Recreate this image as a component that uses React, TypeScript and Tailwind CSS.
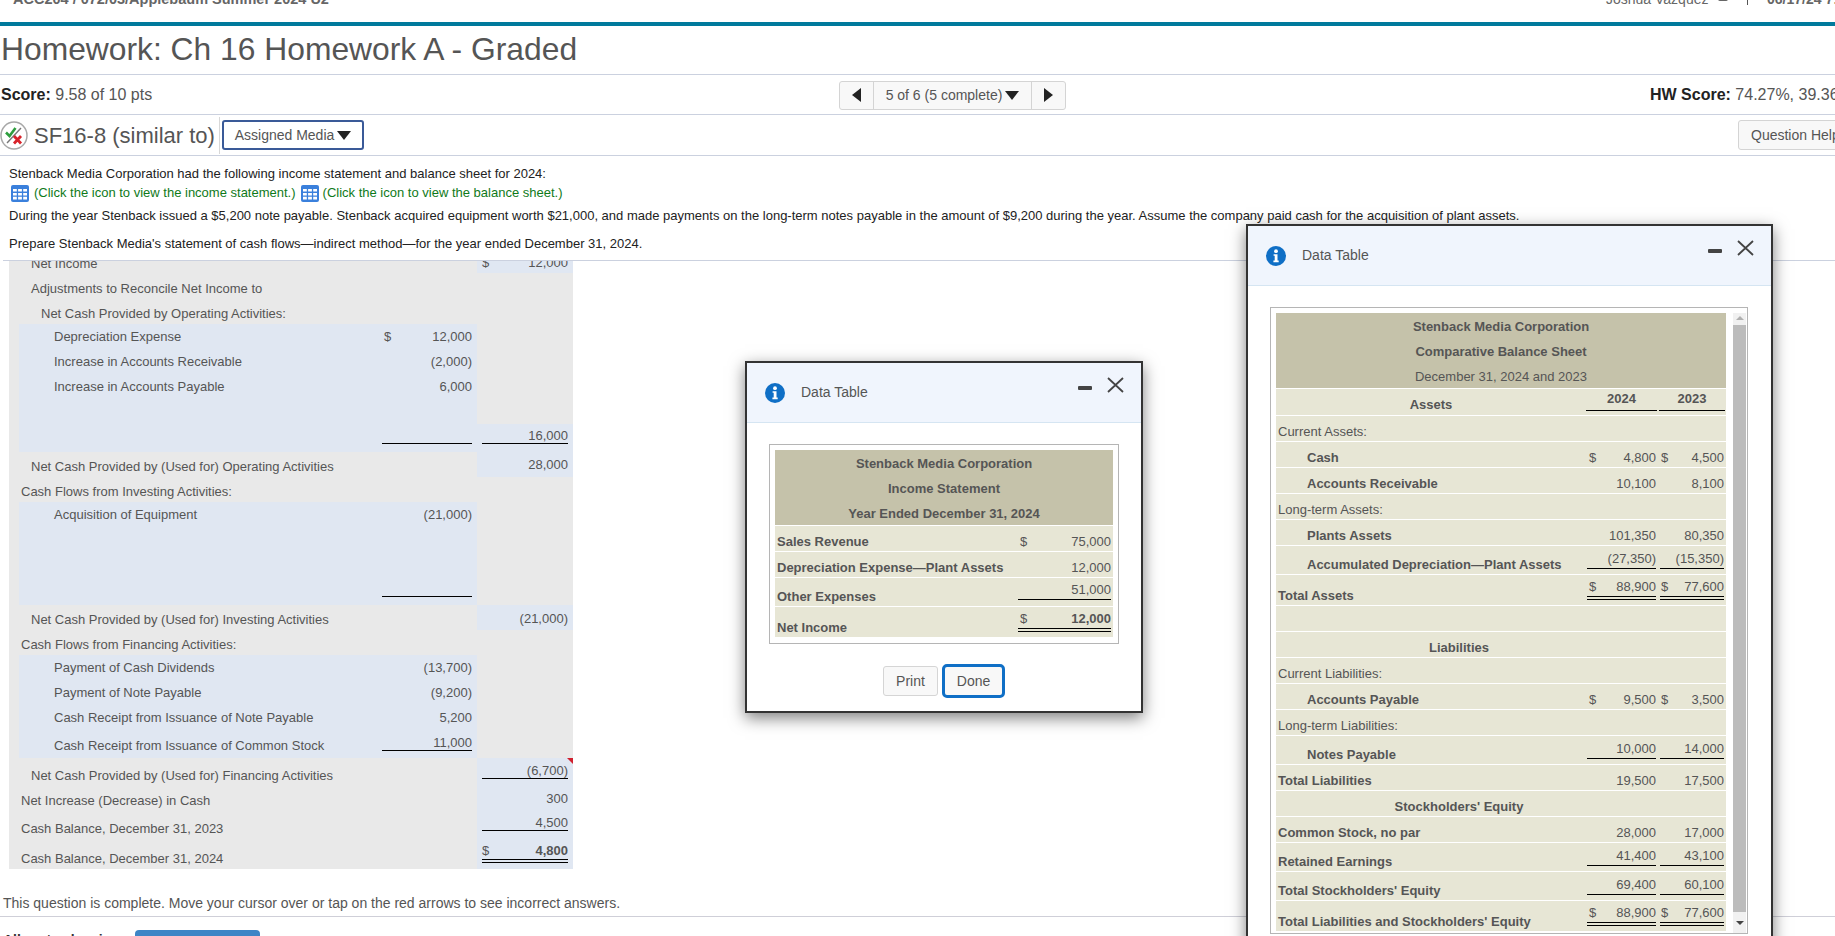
import type { ReactNode } from 'react';

const BLUE = 'bg-[#e0e7f2]';

type FlowRowProps = {
  h: string;
  label?: string;
  pl?: string;
  lt?: string;
  blue?: boolean;
  amount?: string;
  dollar?: boolean;
  at?: string;
  aLine?: boolean;
  total?: string;
  tDollar?: boolean;
  tt?: string;
  tLine?: 'single' | 'double';
  tBlue?: boolean;
  bold?: boolean;
  flag?: boolean;
};

function FlowRow({ h, label, pl, lt, blue, amount, dollar, at, aLine, total, tDollar, tt, tLine, tBlue, bold, flag }: FlowRowProps) {
  const showAmount = amount !== undefined || aLine;
  const lineClass = tLine === 'single' ? 'border-b border-black' : tLine === 'double' ? 'border-b-4 border-double border-black' : '';
  return (
    <div className={`flex pl-[10px] ${h}`}>
      <div className={`flex flex-1 ${blue ? BLUE : ''}`}>
        <div className={`flex-1 leading-[18px] ${pl} ${lt}`}>{label}</div>
        <div className={`w-[90px] mr-[5px] ${at}`}>
          {showAmount && (
            <div className={`flex justify-between h-[17px] leading-[18px] ${aLine ? 'border-b border-black' : ''}`}>
              <span className="pl-[2px]">{dollar ? '$' : ''}</span>
              <span>{amount}</span>
            </div>
          )}
        </div>
      </div>
      <div className={`relative w-[96px] px-[5px] ${tBlue ? BLUE : ''} ${tt}`}>
        {total !== undefined && (
          <div className={`flex justify-between leading-[18px] ${lineClass} ${tLine === 'single' ? 'h-[17px]' : ''} ${tLine === 'double' ? 'h-[21px]' : ''} ${bold ? 'font-bold' : ''}`}>
            <span className="font-normal">{tDollar ? '$' : ''}</span>
            <span>{total}</span>
          </div>
        )}
        {flag && <div className="absolute top-0 right-0 w-0 h-0 border-t-[6px] border-l-[6px] border-t-[#d0202e] border-l-transparent" />}
      </div>
    </div>
  );
}

function InfoIcon() {
  return (
    <svg width="20" height="20" viewBox="0 0 20 20" className="shrink-0">
      <circle cx="10" cy="10" r="10" fill="#0f6fc6" />
      <circle cx="10" cy="5.2" r="1.9" fill="#fff" />
      <path d="M7.6 8.2h3.9v6.4h1.2v1.6H7.4v-1.6h1.3V9.8H7.6z" fill="#fff" />
    </svg>
  );
}

function CloseIcon() {
  return (
    <svg width="17" height="16" viewBox="0 0 17 16">
      <path d="M1 1l15 14M16 1L1 15" stroke="#444" strokeWidth="1.8" fill="none" />
    </svg>
  );
}

function GridIcon() {
  return (
    <svg width="18" height="17" viewBox="0 0 18 17" className="shrink-0">
      <rect width="18" height="17" rx="2" fill="#3a80dc" />
      <path d="M2 4h3.8v2.6H2zM7.1 4h3.8v2.6H7.1zM12.2 4H16v2.6h-3.8zM2 7.9h3.8v2.6H2zM7.1 7.9h3.8v2.6H7.1zM12.2 7.9H16v2.6h-3.8zM2 11.8h3.8v2.6H2zM7.1 11.8h3.8v2.6H7.1zM12.2 11.8H16v2.6h-3.8z" fill="#fff" />
    </svg>
  );
}

function StatusIcon() {
  return (
    <svg width="28" height="29" viewBox="0 0 28 29" className="shrink-0">
      <ellipse cx="14" cy="14.5" rx="13" ry="13.5" fill="#fff" stroke="#a8a8a8" strokeWidth="1.5" />
      <path d="M21 7L7 22" stroke="#777" strokeWidth="1.4" />
      <path d="M6 11.5l3.5 3.5L15.5 7" stroke="#2e9e3e" strokeWidth="2.6" fill="none" />
      <path d="M14 15l7 7.5M21 15l-7 7.5" stroke="#d8232a" strokeWidth="2.8" fill="none" />
    </svg>
  );
}

function ModalHeader() {
  return (
    <div className="flex items-center h-[60px] pl-[18px] pr-[17px] bg-[#f0f5fd] border-b border-[#d5e5f2]">
      <InfoIcon />
      <span className="ml-[16px] text-[14px] text-[#555]">Data Table</span>
      <div className="ml-auto flex items-center gap-[15px] -mt-[16px]">
        <div className="w-[14px] h-[4px] rounded-[1px] bg-[#444] mt-[7px]" />
        <CloseIcon />
      </div>
    </div>
  );
}

function DollarValue({ dollar, value, line, bold, w, pad, className }: { dollar?: boolean; value?: string; line?: 'single' | 'double'; bold?: boolean; w: string; pad: string; className?: string }) {
  const border = line === 'single' ? 'border-b border-black h-[19px]' : line === 'double' ? 'border-b-4 border-double border-black h-[22px]' : 'h-[19px]';
  return (
    <div className={`${w} ${className ?? ''}`}>
      <div className={`flex justify-between leading-[17px] ${border} ${bold ? 'font-bold' : ''}`}>
        <span className={pad}>{dollar ? '$' : ''}</span>
        <span>{value}</span>
      </div>
    </div>
  );
}

type SheetRowProps = {
  h: string;
  label?: string;
  plain?: boolean;
  pl?: string;
  vb?: string;
  a?: string;
  b?: string;
  dollar?: boolean;
  line?: 'single' | 'double';
  center?: boolean;
};

function SheetRow({ h, label, plain, pl, vb, a, b, dollar, line, center }: SheetRowProps) {
  return (
    <div className={`flex items-end bg-[#e7e6d5] ${h}`}>
      <div className={`leading-[16px] pb-px ${center ? 'w-[364px] text-center font-bold' : 'flex-1'} ${plain ? '' : 'font-bold'} ${pl ?? 'pl-[2px]'}`}>{label}</div>
      {a !== undefined && (
        <div className={`flex ml-auto gap-[4px] pr-[2px] ${vb}`}>
          <DollarValue dollar={dollar} value={a} line={line} w="w-[69px]" pad="pl-[2px]" />
          <DollarValue dollar={dollar} value={b} line={line} w="w-[64px]" pad="pl-px" />
        </div>
      )}
    </div>
  );
}

function Rule({ children, className }: { children: ReactNode; className?: string }) {
  return <div className={`border-b border-[#cbd1df] ${className ?? ''}`}>{children}</div>;
}

export default function App() {
  return (
    <div className="relative w-[1835px] h-[936px] overflow-hidden bg-white text-[#555]" style={{ fontFamily: '"Liberation Sans", Arial, sans-serif' }}>
      {/* cut off top bar */}
      <div className="flex justify-between h-[22px] overflow-hidden whitespace-nowrap">
        <span className="pl-[13px] -mt-[11px] text-[14.5px] font-bold text-[#666]">ACC204 / 072/03/Applebaum Summer 2024 U2</span>
        <div className="flex items-start -mt-[11px] w-[229px] text-[14px]">
          <span className="shrink-0 w-[102px] text-[#666]">Joshua Vazquez</span>
          <div className="shrink-0 w-[10px] h-[13px] ml-[10px] -mt-[1px] bg-[#666] rounded-[2px]" />
          <div className="shrink-0 w-px h-[16px] ml-[19px] bg-[#555]" />
          <span className="shrink-0 ml-[19px] font-bold text-[#666]">06/17/24 7:21 PM</span>
        </div>
      </div>
      <div className="h-[4px] bg-[#007a9c]" />

      <Rule className="h-[49px]">
        <h1 className="pl-px pt-[3px] text-[31.8px] leading-[40px] text-[#555]">Homework: Ch 16 Homework A - Graded</h1>
      </Rule>

      <Rule className="grid grid-cols-[839px_227px_1fr] items-center h-[40px] text-[16px] whitespace-nowrap">
        <div className="pl-px">
          <b className="text-[#222]">Score:</b> 9.58 of 10 pts
        </div>
        <div className="flex h-[29px] mt-[1px] text-[14px] bg-[#f8f8f8] border border-[#d4d4d4] rounded-[3px]">
          <div className="flex items-center justify-center w-[34px] border-r border-[#d4d4d4]">
            <div className="w-0 h-0 border-y-[7px] border-y-transparent border-r-[9px] border-r-[#222]" />
          </div>
          <div className="flex items-center justify-center flex-1 gap-[3px]">
            5 of 6 (5 complete)
            <div className="w-0 h-0 border-x-[7px] border-x-transparent border-t-[9px] border-t-[#222]" />
          </div>
          <div className="flex items-center justify-center w-[34px] border-l border-[#d4d4d4]">
            <div className="w-0 h-0 border-y-[7px] border-y-transparent border-l-[9px] border-l-[#222]" />
          </div>
        </div>
        <div className="pl-[584px]">
          <b className="text-[#222]">HW Score:</b> 74.27%, 39.36 of 53 pts
        </div>
      </Rule>

      <Rule className="flex items-center h-[41px] whitespace-nowrap">
        <StatusIcon />
        <span className="shrink-0 w-[185px] ml-[6px] text-[22px]">SF16-8 (similar to)</span>
        <div className="shrink-0 w-px h-[37px] bg-[#d8d8d8]" />
        <button className="shrink-0 flex items-center justify-center gap-[3px] w-[142px] h-[30px] ml-[2px] text-[14px] border-2 border-[#3a5a98] rounded-[3px]">
          Assigned Media
          <span className="w-0 h-0 border-x-[7px] border-x-transparent border-t-[9px] border-t-[#222]" />
        </button>
        <button className="shrink-0 w-[120px] h-[30px] ml-[1374px] pl-[12px] text-left text-[14px] bg-[#f8f8f8] border border-[#d4d4d4] rounded-[3px]">Question Help</button>
      </Rule>

      <Rule className="ml-[3px] pl-[6px] pt-[10px] pb-[8px] text-[13px] leading-[16px] text-[#222] whitespace-nowrap">
        <div>Stenback Media Corporation had the following income statement and balance sheet for 2024:</div>
        <div className="flex items-center h-[16px] mt-[3px] pl-[2px] text-[#0f7a1a]">
          <GridIcon />
          <span className="ml-[5px]">(Click the icon to view the income statement.)</span>
          <span className="ml-[5px]"><GridIcon /></span>
          <span className="ml-[4px]">(Click the icon to view the balance sheet.)</span>
        </div>
        <div className="mt-[7px]">During the year Stenback issued a $5,200 note payable. Stenback acquired equipment worth $21,000, and made payments on the long-term notes payable in the amount of $9,200 during the year. Assume the company paid cash for the acquisition of plant assets.</div>
        <div className="mt-[12px]">Prepare Stenback Media's statement of cash flows—indirect method—for the year ended December 31, 2024.</div>
      </Rule>

      {/* cash flow statement, scrolled so the first row is cut */}
      <div className="ml-[9px] w-[564px] h-[608px] overflow-hidden bg-[#e9e9e9] text-[13px]">
        <div className="-mt-[13px]">
          <FlowRow h="h-[25px]" label="Net Income" pl="pl-[12px]" lt="pt-[7px]" total="12,000" tDollar tt="pt-[6px]" tBlue />
          <FlowRow h="h-[25px]" label="Adjustments to Reconcile Net Income to" pl="pl-[12px]" lt="pt-[7px]" />
          <FlowRow h="h-[26px]" label="Net Cash Provided by Operating Activities:" pl="pl-[22px]" lt="pt-[7px]" />
          <FlowRow h="h-[25px]" blue label="Depreciation Expense" pl="pl-[35px]" lt="pt-[4px]" amount="12,000" dollar at="pt-[4px]" />
          <FlowRow h="h-[25px]" blue label="Increase in Accounts Receivable" pl="pl-[35px]" lt="pt-[4px]" amount="(2,000)" at="pt-[4px]" />
          <FlowRow h="h-[50px]" blue label="Increase in Accounts Payable" pl="pl-[35px]" lt="pt-[4px]" amount="6,000" at="pt-[4px]" />
          <FlowRow h="h-[28px]" blue aLine at="pt-[3px]" total="16,000" tt="pt-[3px]" tLine="single" tBlue />
          <FlowRow h="h-[25px]" label="Net Cash Provided by (Used for) Operating Activities" pl="pl-[12px]" lt="pt-[6px]" total="28,000" tt="pt-[4px]" tBlue />
          <FlowRow h="h-[25px]" label="Cash Flows from Investing Activities:" pl="pl-[2px]" lt="pt-[6px]" />
          <FlowRow h="h-[75px]" blue label="Acquisition of Equipment" pl="pl-[35px]" lt="pt-[4px]" amount="(21,000)" at="pt-[4px]" />
          <FlowRow h="h-[28px]" blue aLine at="pt-[3px]" />
          <FlowRow h="h-[25px]" label="Net Cash Provided by (Used for) Investing Activities" pl="pl-[12px]" lt="pt-[6px]" total="(21,000)" tt="pt-[5px]" tBlue />
          <FlowRow h="h-[25px]" label="Cash Flows from Financing Activities:" pl="pl-[2px]" lt="pt-[6px]" />
          <FlowRow h="h-[25px]" blue label="Payment of Cash Dividends" pl="pl-[35px]" lt="pt-[4px]" amount="(13,700)" at="pt-[4px]" />
          <FlowRow h="h-[25px]" blue label="Payment of Note Payable" pl="pl-[35px]" lt="pt-[4px]" amount="(9,200)" at="pt-[4px]" />
          <FlowRow h="h-[25px]" blue label="Cash Receipt from Issuance of Note Payable" pl="pl-[35px]" lt="pt-[4px]" amount="5,200" at="pt-[4px]" />
          <FlowRow h="h-[28px]" blue label="Cash Receipt from Issuance of Common Stock" pl="pl-[35px]" lt="pt-[7px]" amount="11,000" aLine at="pt-[4px]" />
          <FlowRow h="h-[28px]" label="Net Cash Provided by (Used for) Financing Activities" pl="pl-[12px]" lt="pt-[9px]" total="(6,700)" tt="pt-[4px]" tLine="single" tBlue flag />
          <FlowRow h="h-[28px]" label="Net Increase (Decrease) in Cash" pl="pl-[2px]" lt="pt-[6px]" total="300" tt="pt-[4px]" tBlue />
          <FlowRow h="h-[28px]" label="Cash Balance, December 31, 2023" pl="pl-[2px]" lt="pt-[6px]" total="4,500" tt="pt-0" tLine="single" tBlue />
          <FlowRow h="h-[27px]" label="Cash Balance, December 31, 2024" pl="pl-[2px]" lt="pt-[8px]" total="4,800" tDollar tt="pt-0" tLine="double" tBlue bold />
        </div>
      </div>

      <div className="border-b border-[#cfcfd8] pl-[3px] pt-[26px] pb-[5px] text-[14px] leading-[16px] whitespace-nowrap">
        This question is complete. Move your cursor over or tap on the red arrows to see incorrect answers.
      </div>
      <div className="flex pl-[3px] pt-[13px] text-[14px] font-bold text-[#333] whitespace-nowrap">
        <span className="w-[132px] pt-[2px] leading-[16px]">All parts showing</span>
        <div className="w-[125px] h-[20px] bg-[#3d85c6] rounded-t-[4px]" />
      </div>

      {/* income statement window */}
      <div className="absolute left-[745px] top-[361px] w-[398px] h-[352px] bg-white border-2 border-[#333] shadow-[0_5px_15px_rgba(0,0,0,0.5)]">
        <ModalHeader />
        <div className="w-[350px] h-[200px] ml-[22px] mt-[21px] p-[5px] border border-[#b5b5b5] text-[13px]">
          <div className="flex flex-col gap-px">
            <div className="flex flex-col items-center justify-center h-[75px] pt-[2px] bg-[#c5c2aa] font-bold leading-[25px]">
              <div>Stenback Media Corporation</div>
              <div>Income Statement</div>
              <div>Year Ended December 31, 2024</div>
            </div>
            <div className="flex items-end justify-between h-[25px] pr-[2px] bg-[#e7e6d5]">
              <div className="pl-[2px] pb-px leading-[16px] font-bold">Sales Revenue</div>
              <DollarValue dollar value="75,000" w="w-[93px]" pad="pl-[2px]" className="-mb-px" />
            </div>
            <div className="flex items-end justify-between h-[25px] pr-[2px] bg-[#e7e6d5]">
              <div className="pl-[2px] pb-px leading-[16px] font-bold">Depreciation Expense—Plant Assets</div>
              <DollarValue value="12,000" w="w-[93px]" pad="pl-[2px]" className="-mb-px" />
            </div>
            <div className="flex items-end justify-between h-[28px] pr-[2px] bg-[#e7e6d5]">
              <div className="pl-[2px] pb-px leading-[16px] font-bold">Other Expenses</div>
              <DollarValue value="51,000" line="single" w="w-[93px]" pad="pl-[2px]" className="mb-[6px]" />
            </div>
            <div className="flex items-end justify-between h-[30px] pr-[2px] bg-[#e7e6d5]">
              <div className="pl-[2px] pb-px leading-[16px] font-bold">Net Income</div>
              <DollarValue dollar value="12,000" line="double" bold w="w-[93px]" pad="pl-[2px] font-normal" className="mb-[5px]" />
            </div>
          </div>
        </div>
        <div className="flex items-center justify-center gap-[4px] mt-[20px] text-[14px]">
          <button className="w-[55px] h-[30px] bg-[#f8f8f8] border border-[#d5d5d5] rounded-[3px]">Print</button>
          <button className="w-[63px] h-[34px] bg-[#f8f8f8] border-[3px] border-[#0f6fc6] rounded-[5px]">Done</button>
        </div>
      </div>

      {/* balance sheet window */}
      <div className="absolute left-[1246px] top-[224px] w-[527px] h-[760px] bg-white border-2 border-[#333] shadow-[0_5px_15px_rgba(0,0,0,0.5)]">
        <ModalHeader />
        <div className="flex w-[478px] h-[627px] ml-[22px] mt-[21px] p-[5px] pb-0 border border-[#b5b5b5] text-[13px]">
          <div className="flex flex-col gap-px w-[450px]">
            <div className="flex flex-col items-center justify-center h-[75px] pt-[2px] bg-[#c5c2aa] font-bold leading-[25px]">
              <div>Stenback Media Corporation</div>
              <div>Comparative Balance Sheet</div>
              <div className="font-normal">December 31, 2024 and 2023</div>
            </div>
            <div className="flex items-end bg-[#e7e6d5] h-[26px]">
              <div className="w-[310px] pb-[2px] text-center font-bold leading-[16px]">Assets</div>
              <div className="ml-auto flex gap-[2px] pr-px pb-[4px] font-bold leading-[16px]">
                <div className="w-[71px] h-[20px] text-center border-b border-black">2024</div>
                <div className="w-[66px] h-[20px] text-center border-b border-black">2023</div>
              </div>
            </div>
            <SheetRow h="h-[25px]" label="Current Assets:" plain />
            <SheetRow h="h-[25px]" label="Cash" pl="pl-[31px]" vb="-mb-[1px]" a="4,800" b="4,500" dollar />
            <SheetRow h="h-[25px]" label="Accounts Receivable" pl="pl-[31px]" vb="-mb-[1px]" a="10,100" b="8,100" />
            <SheetRow h="h-[25px]" label="Long-term Assets:" plain />
            <SheetRow h="h-[25px]" label="Plants Assets" pl="pl-[31px]" vb="-mb-[1px]" a="101,350" b="80,350" />
            <SheetRow h="h-[28px]" label="Accumulated Depreciation—Plant Assets" pl="pl-[31px]" vb="mb-[5px]" a="(27,350)" b="(15,350)" line="single" />
            <SheetRow h="h-[30px]" label="Total Assets" vb="mb-[5px]" a="88,900" b="77,600" dollar line="double" />
            <SheetRow h="h-[25px]" />
            <SheetRow h="h-[25px]" label="Liabilities" center />
            <SheetRow h="h-[25px]" label="Current Liabilities:" plain />
            <SheetRow h="h-[25px]" label="Accounts Payable" pl="pl-[31px]" vb="-mb-[1px]" a="9,500" b="3,500" dollar />
            <SheetRow h="h-[25px]" label="Long-term Liabilities:" plain />
            <SheetRow h="h-[28px]" label="Notes Payable" pl="pl-[31px]" vb="mb-[5px]" a="10,000" b="14,000" line="single" />
            <SheetRow h="h-[25px]" label="Total Liabilities" vb="-mb-[1px]" a="19,500" b="17,500" />
            <SheetRow h="h-[25px]" label="Stockholders' Equity" center />
            <SheetRow h="h-[25px]" label="Common Stock, no par" vb="-mb-[1px]" a="28,000" b="17,000" />
            <SheetRow h="h-[28px]" label="Retained Earnings" vb="mb-[5px]" a="41,400" b="43,100" line="single" />
            <SheetRow h="h-[28px]" label="Total Stockholders' Equity" vb="mb-[5px]" a="69,400" b="60,100" line="single" />
            <SheetRow h="h-[30px]" label="Total Liabilities and Stockholders' Equity" vb="mb-[5px]" a="88,900" b="77,600" dollar line="double" />
          </div>
          <div className="flex flex-col items-center w-[13px] h-[620px] ml-[7px] bg-[#f1f1f1]">
            <div className="mt-[3px] w-0 h-0 border-x-[4px] border-x-transparent border-b-[4px] border-b-[#b0b0b0]" />
            <div className="w-[13px] h-[587px] mt-[5px] bg-[#bcbcbc]" />
            <div className="mt-[9px] w-0 h-0 border-x-[4px] border-x-transparent border-t-[4px] border-t-[#444]" />
          </div>
        </div>
      </div>
    </div>
  );
}
